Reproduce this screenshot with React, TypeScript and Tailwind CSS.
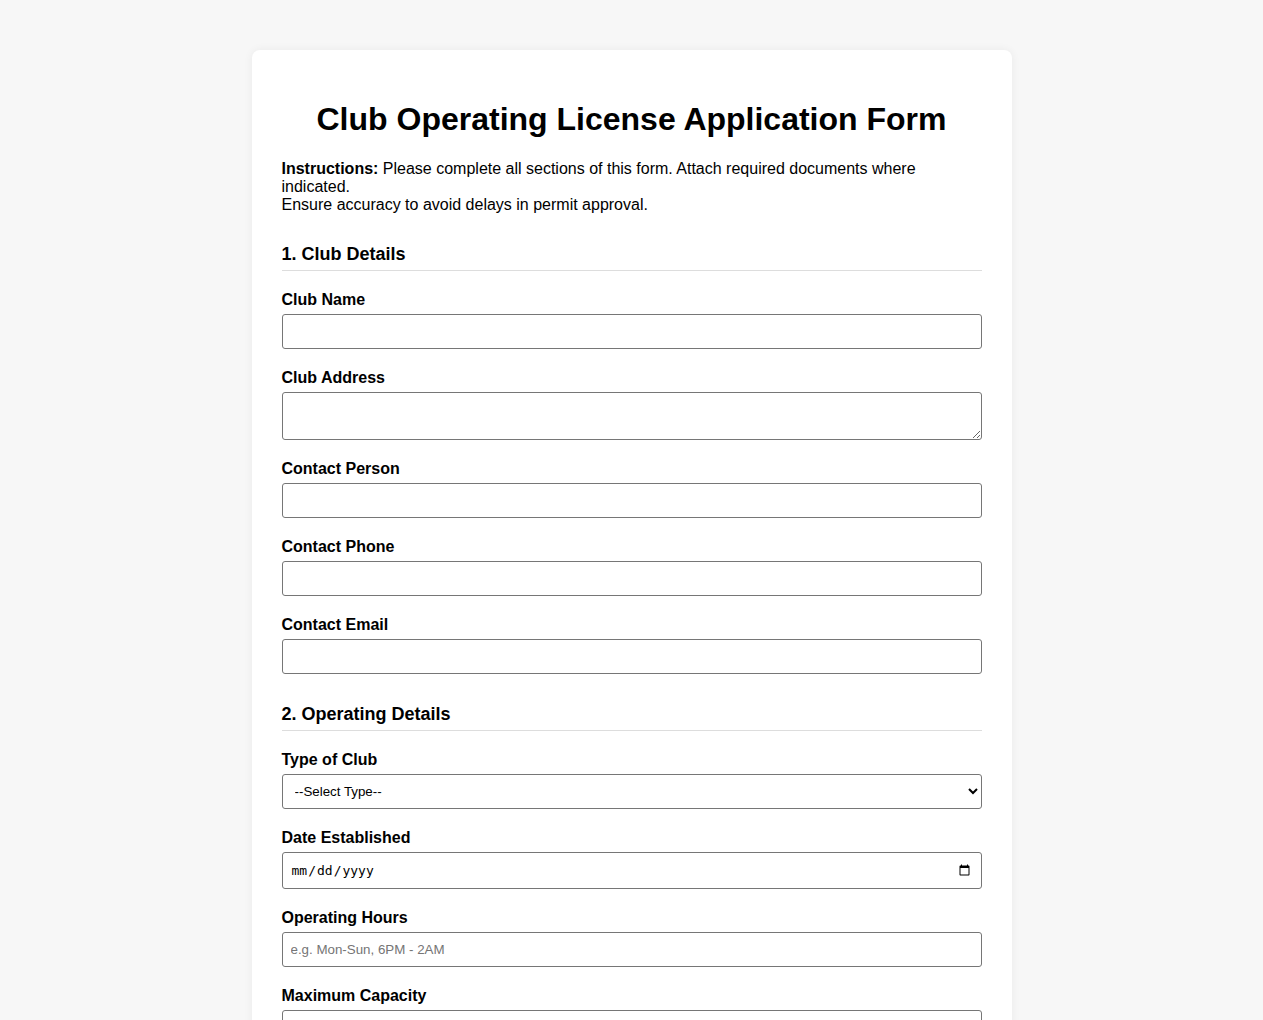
import React from 'react';

const font = { fontFamily: '"Liberation Sans", Arial, sans-serif' };

const inputCls =
  'block w-full h-[35px] px-2 border border-[#767676] rounded-[3px] bg-white text-[13.33px] text-black placeholder:text-[#757575] font-["Liberation_Sans",Arial,sans-serif]';

const Label: React.FC<{ children: React.ReactNode; htmlFor?: string }> = ({ children, htmlFor }) => (
  <label htmlFor={htmlFor} className="block mb-[4px] text-base leading-[20px] font-bold">
    {children}
  </label>
);

const Group: React.FC<{ children: React.ReactNode }> = ({ children }) => (
  <div className="mb-[19px]">{children}</div>
);

const Section: React.FC<{ title: string }> = ({ title }) => (
  <h2 className="mt-[30px] mb-[19px] pb-[5px] border-b border-[#dddddd] text-[18px] leading-[21px] font-bold">
    {title}
  </h2>
);

export default function App() {
  return (
    <div className="min-h-screen bg-[#f7f7f7] py-[50px] text-black" style={font}>
      <div className="mx-auto w-[760px] bg-white rounded-lg shadow-[0_0_10px_rgba(0,0,0,0.06)] p-[30px]">
        <h1 className="mt-[21px] mb-[22px] text-[32px] leading-[37px] font-bold text-center">
          Club Operating License Application Form
        </h1>

        <p className="mb-4 text-base leading-[18px]">
          <strong>Instructions:</strong> Please complete all sections of this form. Attach required documents where
          indicated.
          <br />
          Ensure accuracy to avoid delays in permit approval.
        </p>

        <form>
          {/* Section 1 */}
          <Section title="1. Club Details" />
          <Group>
            <Label htmlFor="clubName">Club Name</Label>
            <input id="clubName" type="text" className={inputCls} />
          </Group>
          <Group>
            <Label htmlFor="clubAddress">Club Address</Label>
            <textarea
              id="clubAddress"
              className="block w-full h-[48px] px-2 py-2 border border-[#767676] rounded-[3px] bg-white text-[13.33px] resize-y"
            />
          </Group>
          <Group>
            <Label htmlFor="contactPerson">Contact Person</Label>
            <input id="contactPerson" type="text" className={inputCls} />
          </Group>
          <Group>
            <Label htmlFor="contactPhone">Contact Phone</Label>
            <input id="contactPhone" type="tel" className={inputCls} />
          </Group>
          <Group>
            <Label htmlFor="contactEmail">Contact Email</Label>
            <input id="contactEmail" type="email" className={inputCls} />
          </Group>

          {/* Section 2 */}
          <Section title="2. Operating Details" />
          <Group>
            <Label htmlFor="clubType">Type of Club</Label>
            <select id="clubType" defaultValue="" className={inputCls}>
              <option value="">--Select Type--</option>
              <option>Nightclub</option>
              <option>Sports Club</option>
              <option>Social Club</option>
              <option>Private Members Club</option>
            </select>
          </Group>
          <Group>
            <Label htmlFor="established">Date Established</Label>
            <input
              id="established"
              type="date"
              className='block w-full h-[37px] px-2 border border-[#767676] rounded-[3px] bg-white text-[13px] font-["DejaVu_Sans_Mono",monospace]'
            />
          </Group>
          <Group>
            <Label htmlFor="hours">Operating Hours</Label>
            <input id="hours" type="text" placeholder="e.g. Mon-Sun, 6PM - 2AM" className={inputCls} />
          </Group>
          <Group>
            <Label htmlFor="capacity">Maximum Capacity</Label>
            <input id="capacity" type="number" className={inputCls} />
          </Group>

          {/* Section 3 */}
          <Section title="3. Required Documents" />
          <Group>
            <Label htmlFor="floorPlan">Floor Plan</Label>
            <input id="floorPlan" type="file" className="block text-[13.33px]" />
          </Group>
          <Group>
            <Label htmlFor="fireCert">Fire Safety Certificate</Label>
            <input id="fireCert" type="file" className="block text-[13.33px]" />
          </Group>

          <button
            type="submit"
            className="mt-[10px] px-5 py-[10px] bg-[#007bff] text-white rounded-[4px] text-base"
          >
            Submit Application
          </button>
        </form>
      </div>
    </div>
  );
}
